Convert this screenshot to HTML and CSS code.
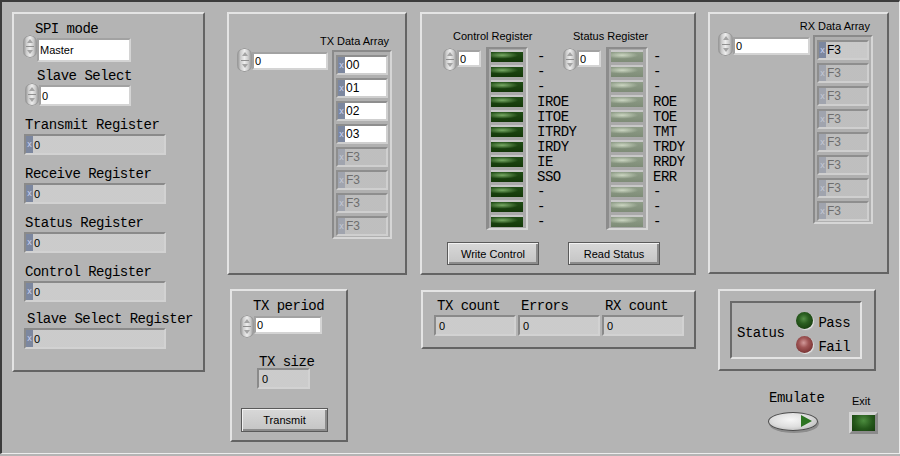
FILE: index.html
```html
<!DOCTYPE html>
<html lang="en">
<head>
<meta charset="utf-8">
<title>SPI Emulator</title>
<link rel="stylesheet" href="styles.css">
</head>
<body>
<main class="frame">
  <div class="col col-a">
    <section class="panel spi">
      <div class="mono lbl-spi">SPI mode</div>
      <div class="ring-ctl"><span class="spin"></span><span class="box box-ring">Master</span></div>
      <div class="mono lbl-ss">Slave Select</div>
      <div class="num-ctl"><span class="spin"></span><span class="box box-ss">0</span></div>
      <div class="mono reg-lbl">Transmit Register</div>
      <div class="ind reg-ind"><span class="radix">x</span><span class="val">0</span></div>
      <div class="mono reg-lbl">Receive Register</div>
      <div class="ind reg-ind"><span class="radix">x</span><span class="val">0</span></div>
      <div class="mono reg-lbl">Status Register</div>
      <div class="ind reg-ind"><span class="radix">x</span><span class="val">0</span></div>
      <div class="mono reg-lbl">Control Register</div>
      <div class="ind reg-ind"><span class="radix">x</span><span class="val">0</span></div>
      <div class="mono reg-lbl reg-lbl-last">Slave Select Register</div>
      <div class="ind reg-ind"><span class="radix">x</span><span class="val">0</span></div>
    </section>
  </div>

  <div class="col col-b">
    <section class="panel txarr">
      <div class="idx idx-tx"><span class="spin spin-lg"></span><span class="box">0</span></div>
      <div class="arr-block arr-block-tx">
        <div class="sans arr-lbl">TX Data Array</div>
        <div class="arr">
          <div class="el"><span class="radix">x</span><span class="val">00</span></div>
          <div class="el"><span class="radix">x</span><span class="val">01</span></div>
          <div class="el"><span class="radix">x</span><span class="val">02</span></div>
          <div class="el"><span class="radix">x</span><span class="val">03</span></div>
          <div class="el el-dis"><span class="radix">x</span><span class="val">F3</span></div>
          <div class="el el-dis"><span class="radix">x</span><span class="val">F3</span></div>
          <div class="el el-dis"><span class="radix">x</span><span class="val">F3</span></div>
          <div class="el el-dis"><span class="radix">x</span><span class="val">F3</span></div>
        </div>
      </div>
    </section>
    <section class="panel txp">
      <div class="mono lbl-txp">TX period</div>
      <div class="txp-row"><span class="spin"></span><span class="box">0</span></div>
      <div class="mono lbl-size">TX size</div>
      <div class="ind size-ind"><span class="val">0</span></div>
      <button class="btn btn-tx" type="button">Transmit</button>
    </section>
  </div>

  <div class="col col-c">
    <section class="panel regs">
      <div class="grps">
        <div class="grp">
          <div class="sans grp-lbl">Control Register</div>
          <div class="grp-row">
            <span class="spin"></span><span class="box">0</span>
            <div class="ledcol">
              <span class="led"></span><span class="led"></span><span class="led"></span><span class="led"></span>
              <span class="led"></span><span class="led"></span><span class="led"></span><span class="led"></span>
              <span class="led"></span><span class="led"></span><span class="led"></span><span class="led"></span>
            </div>
            <div class="mono bits">-<br>-<br>-<br>IROE<br>ITOE<br>ITRDY<br>IRDY<br>IE<br>SSO<br>-<br>-<br>-</div>
          </div>
        </div>
        <div class="grp">
          <div class="sans grp-lbl">Status Register</div>
          <div class="grp-row">
            <span class="spin"></span><span class="box">0</span>
            <div class="ledcol">
              <span class="led led-off"></span><span class="led led-off"></span><span class="led led-off"></span><span class="led led-off"></span>
              <span class="led led-off"></span><span class="led led-off"></span><span class="led led-off"></span><span class="led led-off"></span>
              <span class="led led-off"></span><span class="led led-off"></span><span class="led led-off"></span><span class="led led-off"></span>
            </div>
            <div class="mono bits bits-s">-<br>-<br>-<br>ROE<br>TOE<br>TMT<br>TRDY<br>RRDY<br>ERR<br>-<br>-<br>-</div>
          </div>
        </div>
      </div>
      <div class="btns">
        <button class="btn btn-w" type="button">Write Control</button>
        <button class="btn btn-r" type="button">Read Status</button>
      </div>
    </section>
    <section class="panel counts">
      <div class="cnt"><div class="mono">TX count</div><div class="ind cnt-ind"><span class="val">0</span></div></div>
      <div class="cnt"><div class="mono">Errors</div><div class="ind cnt-ind"><span class="val">0</span></div></div>
      <div class="cnt"><div class="mono">RX count</div><div class="ind cnt-ind"><span class="val">0</span></div></div>
    </section>
  </div>

  <div class="col col-d">
    <section class="panel rx">
      <div class="idx idx-rx"><span class="spin spin-lg"></span><span class="box">0</span></div>
      <div class="arr-block arr-block-rx">
        <div class="sans arr-lbl">RX Data Array</div>
        <div class="arr">
          <div class="el el-ind"><span class="radix">x</span><span class="val">F3</span></div>
          <div class="el el-dis"><span class="radix">x</span><span class="val">F3</span></div>
          <div class="el el-dis"><span class="radix">x</span><span class="val">F3</span></div>
          <div class="el el-dis"><span class="radix">x</span><span class="val">F3</span></div>
          <div class="el el-dis"><span class="radix">x</span><span class="val">F3</span></div>
          <div class="el el-dis"><span class="radix">x</span><span class="val">F3</span></div>
          <div class="el el-dis"><span class="radix">x</span><span class="val">F3</span></div>
          <div class="el el-dis"><span class="radix">x</span><span class="val">F3</span></div>
        </div>
      </div>
    </section>
    <section class="panel status">
      <div class="status-in">
        <div class="mono lbl-status">Status</div>
        <div class="leds">
          <div class="lrow"><span class="rled rled-pass"></span><span class="mono">Pass</span></div>
          <div class="lrow"><span class="rled rled-fail"></span><span class="mono">Fail</span></div>
        </div>
      </div>
    </section>
    <div class="emu-row">
      <div class="emu">
        <div class="mono">Emulate</div>
        <div class="switch"></div>
      </div>
      <div class="exit">
        <div class="sans">Exit</div>
        <div class="exit-btn"></div>
      </div>
    </div>
  </div>
</main>
</body>
</html>
```

FILE: styles.css
```css
* { box-sizing: border-box; }
html, body { margin: 0; padding: 0; background: #b4b4b4; }
body {
  width: 900px; height: 456px; overflow: hidden;
  font-family: "Liberation Sans", Arial, sans-serif; font-size: 11px; color: #000;
}
.frame {
  display: flex; align-items: flex-start;
  width: 900px; height: 454px;
  padding: 10px 0 0 10px;
  border-top: 2px solid #3c3c3c; border-left: 2px solid #3c3c3c;
  border-bottom: 1px solid #ececec; border-right: 1px solid #ececec;
}
.col { display: flex; flex-direction: column; align-items: flex-start; }
.col-b { margin-left: 22px; }
.col-c { margin-left: 13px; }
.col-d { margin-left: 12px; }

.panel {
  display: flex;
  border: 2px solid; border-color: #e4e4e4 #646464 #646464 #e4e4e4;
}
.mono {
  font-family: "Liberation Mono", "Courier New", monospace;
  font-size: 14px; letter-spacing: -0.5px; line-height: 12px; white-space: nowrap;
}
.sans {
  font-family: "Liberation Sans", Arial, sans-serif;
  font-size: 11px; line-height: 13px; white-space: nowrap;
}

/* increment / decrement */
.spin {
  flex: none; position: relative;
  width: 14px; height: 23px; border-radius: 7px;
  background:
    linear-gradient(#8f8f8f, #8f8f8f) center / 8px 1px no-repeat,
    linear-gradient(90deg, #8a8a8a 0%, #cdcdcd 25%, #ededed 50%, #cacaca 75%, #8a8a8a 100%);
  box-shadow: inset 0 0 0 1px #9a9a9a;
}
.spin::before, .spin::after {
  content: ""; position: absolute; left: 50%; margin-left: -3px;
  border-left: 3px solid transparent; border-right: 3px solid transparent;
}
.spin::before { top: 4px; border-bottom: 4px solid #a4a4a4; }
.spin::after { bottom: 4px; border-top: 4px solid #a4a4a4; }
.spin-lg { width: 15px; height: 24px; }

.box {
  flex: none; display: flex; align-items: center;
  background: #fff; padding-left: 1px;
  border: 2px solid; border-color: #a2a2a2 #d4d4d4 #d4d4d4 #a2a2a2;
  font-size: 11px;
}

/* indicators */
.ind {
  display: flex; flex: none;
  border: 2px solid; border-color: #8a8a8a #d2d2d2 #d2d2d2 #8a8a8a;
  background-color: #d6d6d6;
  background-image: radial-gradient(circle, #cbcbcb 0.7px, transparent 0.8px);
  background-size: 2px 2px;
}
.radix {
  flex: none; width: 7px;
  display: flex; align-items: center; justify-content: center;
  background: #7c879f; color: #c9d2f2; font-size: 9px; line-height: 1;
}
.val { display: flex; align-items: center; padding-left: 1px; }

/* SPI panel */
.spi { width: 193px; height: 360px; flex-direction: column; align-items: flex-start; padding-top: 9px; }
.lbl-spi { margin-left: 21px; }
.ring-ctl { display: flex; align-items: flex-start; margin-left: 9px; }
.box-ring { margin-top: 3px; width: 94px; height: 24px; }
.lbl-ss { margin-top: 8px; margin-left: 23px; }
.num-ctl { display: flex; align-items: flex-start; margin-top: 1px; margin-left: 11px; }
.box-ss { margin-top: 2px; width: 92px; height: 21px; }
.reg-lbl { margin-top: 13px; margin-left: 11px; }
.reg-lbl-last { margin-top: 11px; margin-left: 13px; }
.reg-ind { margin-top: 3px; margin-left: 10px; width: 142px; height: 21px; }

/* arrays */
.txarr { width: 180px; height: 263px; align-items: flex-start; padding-left: 8px; }
.rx { width: 181px; height: 262px; align-items: flex-start; padding-left: 8px; }
.idx { display: flex; align-items: flex-start; }
.idx-tx { margin-top: 34px; }
.idx-tx .box { margin-top: 4px; width: 76px; height: 18px; }
.idx-rx { margin-top: 18px; }
.idx-rx .box { margin-top: 5px; width: 77px; height: 18px; }
.arr-block { display: flex; flex-direction: column; align-items: flex-end; width: 60px; }
.arr-block-tx { margin-top: 21px; margin-left: 4px; }
.arr-block-rx { margin-top: 6px; margin-left: 3px; }
.arr-lbl { margin-right: 3px; }
.arr {
  margin-top: 2px; width: 60px;
  display: flex; flex-direction: column; gap: 3px;
  padding: 3px 2px 1px 2px;
  border: 2px solid; border-color: #8a8a8a #d6d6d6 #d6d6d6 #8a8a8a;
  background: #b0b0b0;
}
.el {
  display: flex; height: 20px;
  border: 2px solid; border-color: #8e8e8e #cfcfcf #cfcfcf #8e8e8e;
  background: #fff;
}
.el .val { font-size: 12px; }
.el-dis {
  color: #6e6e6e; background-color: #c8c8c8;
  background-image: radial-gradient(circle, #bebebe 0.7px, transparent 0.8px);
  background-size: 2px 2px;
}
.el-dis .radix { background: #a0a4ae; color: #c6cad6; }
.el-ind {
  background-color: #d4d4d4;
  background-image: radial-gradient(circle, #c8c8c8 0.7px, transparent 0.8px);
  background-size: 2px 2px;
}

/* TX period panel */
.txp { margin-top: 14px; margin-left: 3px; width: 118px; height: 153px; flex-direction: column; align-items: flex-start; }
.lbl-txp { margin-top: 9px; margin-left: 21px; }
.txp-row { display: flex; align-items: flex-start; margin-top: 3px; margin-left: 8px; }
.txp-row .box { margin-top: 1px; width: 68px; height: 18px; }
.lbl-size { margin-top: 18px; margin-left: 27px; }
.size-ind { margin-left: 25px; width: 53px; height: 21px; }
.size-ind .val { padding-left: 3px; }

/* buttons */
.btn {
  display: flex; align-items: center; justify-content: center;
  padding: 0; margin: 0;
  font-family: "Liberation Sans", Arial, sans-serif; font-size: 11px; color: #000;
  border: 1px solid #5a5a5a;
  background: linear-gradient(#d8d8d8, #c4c4c4);
  box-shadow: inset 1px 1px 0 #f2f2f2, inset -2px -2px 0 #8c8c8c;
}
.btn-tx { margin-top: 19px; margin-left: 9px; width: 87px; height: 24px; }

/* registers panel */
.regs { width: 276px; height: 263px; flex-direction: column; align-items: flex-start; padding: 16px 0 0 21px; }
.grps { display: flex; }
.grp { width: 120px; display: flex; flex-direction: column; align-items: flex-start; }
.grp-lbl { margin-left: 10px; }
.grp-row { display: flex; align-items: flex-start; margin-top: 4px; }
.grp-row .spin { margin-top: 1px; }
.grp-row .box { margin-top: 3px; width: 24px; height: 17px; }
.ledcol {
  flex: none; margin-left: 5px; width: 42px; height: 183px;
  display: flex; flex-direction: column; gap: 5px;
  padding: 3px 3px 1px 2px;
  border-style: solid; border-width: 2px 2px 2px 3px;
  border-color: #8c8c8c #d6d6d6 #d6d6d6 #8c8c8c;
  background: #a9a9a9;
}
.led {
  flex: none; width: 32px; height: 10px;
  background:
    radial-gradient(ellipse 50% 35% at 35% 32%, rgba(125,175,105,.95), rgba(125,175,105,0)),
    linear-gradient(#1f4c15, #143809);
  box-shadow: 0 -2px 0 #c8c8c8;
}
.led-off {
  background:
    radial-gradient(ellipse 50% 35% at 35% 32%, rgba(215,225,205,.85), rgba(215,225,205,0)),
    linear-gradient(#8f9d88, #7e8c77);
}
.bits { flex: none; margin-left: 9px; padding-top: 3px; line-height: 15px; }
.bits-s { margin-left: 5px; }
.btns { display: flex; margin-top: 12px; }
.btn-w { margin-left: 4px; width: 92px; height: 23px; }
.btn-r { margin-left: 29px; width: 92px; height: 23px; }

/* counts panel */
.counts { margin-top: 15px; margin-left: 1px; width: 275px; height: 59px; padding: 8px 0 0 11px; align-items: flex-start; gap: 2px; }
.cnt { display: flex; flex-direction: column; align-items: flex-start; }
.cnt .mono { margin-left: 3px; }
.cnt-ind { margin-top: 3px; width: 82px; height: 21px; }
.cnt-ind .val { padding-left: 3px; }

/* status panel */
.status { margin-top: 15px; margin-left: 10px; width: 158px; height: 82px; padding: 10px 0 0 10px; align-items: flex-start; }
.status-in {
  display: flex; align-items: flex-start;
  width: 132px; height: 58px;
  border: 2px solid; border-color: #6a6a6a #e4e4e4 #e4e4e4 #6a6a6a;
}
.lbl-status { margin-top: 24px; margin-left: 5px; }
.leds { margin-top: 9px; margin-left: 12px; display: flex; flex-direction: column; gap: 7px; }
.lrow { display: flex; align-items: flex-start; }
.lrow .mono { margin-top: 5px; margin-left: 5px; }
.rled { flex: none; width: 17px; height: 17px; border-radius: 50%; box-shadow: 1px 1px 1px #e6e6e6; }
.rled-pass { background: radial-gradient(circle at 45% 40%, #568f48 0%, #2b5f21 35%, #184010 75%, #0f2a0a 100%); }
.rled-fail { background: radial-gradient(circle at 45% 40%, #d29a9a 0%, #a05656 35%, #7a3333 75%, #5a2121 100%); }

/* emulate / exit */
.emu-row { display: flex; align-items: flex-start; margin-top: 21px; margin-left: 60px; }
.emu { width: 56px; display: flex; flex-direction: column; align-items: flex-start; }
.emu .mono { margin-left: 1px; }
.switch {
  position: relative; margin-top: 8px; width: 50px; height: 19px; border-radius: 50%;
  background: radial-gradient(ellipse at 45% 40%, #f6f6f6 0%, #dedede 50%, #a6a6a6 100%);
  border: 1px solid #4c4c4c;
  box-shadow: 1px 2px 0 #8c8c8c;
}
.switch::after {
  content: ""; position: absolute; right: 5px; top: 2px;
  border-left: 11px solid #2d7422;
  border-top: 6px solid transparent; border-bottom: 6px solid transparent;
}
.exit { margin-left: 25px; margin-top: 3px; display: flex; flex-direction: column; align-items: flex-start; }
.exit .sans { margin-left: 3px; }
.exit-btn {
  margin-top: 4px; width: 29px; height: 22px;
  border: 3px solid; border-color: #d4d4d4 #8a8a8a #8a8a8a #d4d4d4;
  background: radial-gradient(ellipse at 50% 35%, #4c8c3e 0%, #25581b 55%, #163d0e 100%);
}
```
